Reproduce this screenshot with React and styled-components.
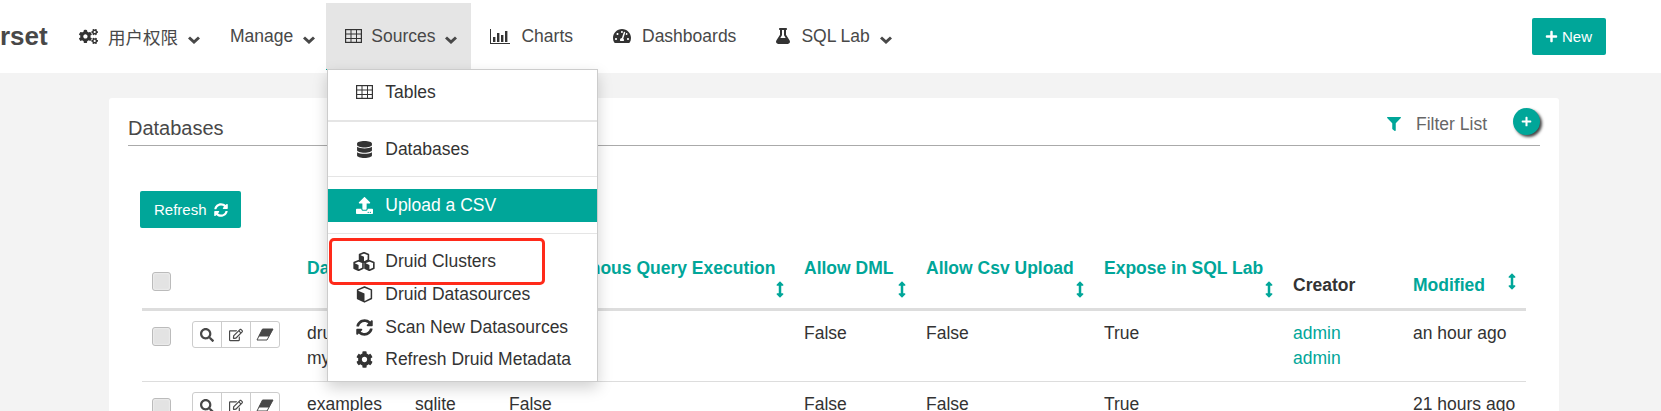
import styled, { createGlobalStyle } from "styled-components";
import {
  FaArrowsAltV,
  FaCog,
  FaCogs,
  FaDatabase,
  FaRegEdit,
  FaFilter,
  FaFlask,
  FaPlus,
  FaSearch,
  FaSyncAlt,
  FaTachometerAlt,
  FaUpload,
} from "react-icons/fa";

const GlobalStyle = createGlobalStyle`
  html, body {
    margin: 0;
    height: 411px;
    overflow: hidden;
    background: #f3f3f3;
    color: #333;
    font-family: "Liberation Sans", "Noto Sans CJK SC", sans-serif;
    font-size: 17.5px;
  }
`;

const Navbar = styled.nav`
  display: flex;
  align-items: center;
  height: 73px;
  box-sizing: border-box;
  padding: 3px 55px 3px 0;
  background: #fff;
`;

const Brand = styled.div`
  width: 60px;
  box-sizing: border-box;
  font-size: 26px;
  font-weight: 700;
  color: #484848;
`;

const NavItem = styled.div`
  position: relative;
  display: flex;
  align-items: center;
  gap: 10px;
  height: 67px;
  box-sizing: border-box;
  padding: 0 ${(p) => p.$right || 20}px 0 19px;
  background: ${(p) => (p.$active ? "#e5e5e5" : "transparent")};
  border-bottom: 1px solid ${(p) => (p.$active ? "#00a699" : "transparent")};
  color: #484848;
  white-space: nowrap;
`;

const NavIcon = styled.span`
  display: flex;
  align-items: center;
  margin-right: ${(p) => p.$after || 0}px;
  font-size: ${(p) => p.$size || 17}px;
  color: #333;
`;

const CaretSvg = styled.svg`
  width: 12px;
  height: 8px;
  margin-top: 8px;
  fill: none;
  stroke: #484848;
  stroke-width: 3;
`;

const Caret = () => (
  <CaretSvg viewBox="0 0 12 8">
    <path d="M1 1.5l5 4.5 5-4.5" />
  </CaretSvg>
);

const NewButton = styled.button`
  display: flex;
  align-items: center;
  gap: 4px;
  margin-left: auto;
  height: 37px;
  padding: 0 14px 0 13px;
  border: 0;
  border-radius: 2px;
  background: #00a699;
  color: #fff;
  font: 15px "Liberation Sans", sans-serif;
  svg {
    font-size: 13px;
  }
`;

const Dropdown = styled.div`
  position: absolute;
  top: 100%;
  left: 1px;
  z-index: 10;
  width: 271px;
  box-sizing: border-box;
  padding: 6px 0 5px;
  background: #fff;
  border: 1px solid #ccc;
  box-shadow: 0 6px 14px rgba(0, 0, 0, 0.18);
`;

const MenuItem = styled.div`
  display: flex;
  align-items: center;
  gap: 12px;
  height: ${(p) => (p.$highlight ? 33 : 32.7)}px;
  padding-left: 27px;
  background: ${(p) => (p.$highlight ? "#00a699" : "transparent")};
  color: ${(p) => (p.$highlight ? "#fff" : "#333")};
`;

const MenuIcon = styled.span`
  display: flex;
  justify-content: center;
  width: 18px;
  font-size: 17px;
  svg {
    flex-shrink: 0;
  }
`;

const MenuDivider = styled.div`
  height: ${(p) => (p.$thick ? 2 : 1)}px;
  margin: ${(p) => p.$top || 11}px 0 ${(p) => p.$bottom || 11}px;
  background: #e5e5e5;
`;

const Callout = styled.div`
  position: absolute;
  top: 168px;
  left: 1px;
  width: 216px;
  height: 47px;
  box-sizing: border-box;
  border: 3px solid #ff2a1a;
  border-radius: 5px;
`;

const Main = styled.main`
  padding: 25px 102px 0 109px;
`;

const Panel = styled.section`
  height: 400px;
  box-sizing: border-box;
  padding: 0 19px;
  background: #fff;
  border-radius: 3px;
`;

const PanelHeader = styled.header`
  display: flex;
  align-items: flex-start;
  height: 48px;
  box-sizing: border-box;
  padding-top: 12px;
  border-bottom: 1px solid #aaa;
`;

const PanelTitle = styled.h2`
  margin: 8px auto 0 0;
  font-size: 20px;
  font-weight: 400;
  line-height: 20px;
  color: #484848;
`;

const FilterLink = styled.div`
  display: flex;
  align-items: center;
  gap: 15px;
  margin: 3px 26px 0 0;
  line-height: 22px;
  color: #666;
  svg {
    font-size: 14px;
    color: #00a699;
  }
`;

const Fab = styled.button`
  display: flex;
  align-items: center;
  justify-content: center;
  width: 27px;
  height: 27px;
  margin-top: -2px;
  padding: 0;
  border: 0;
  border-radius: 50%;
  background: #00a699;
  color: #fff;
  font-size: 11px;
  box-shadow: 2px 2px 3px #444;
`;

const RefreshButton = styled.button`
  display: flex;
  align-items: center;
  gap: 7px;
  height: 37px;
  margin: 45px 0 28px 12px;
  padding: 0 13px 0 14px;
  border: 0;
  border-radius: 2px;
  background: #00a699;
  color: #fff;
  font: 15px "Liberation Sans", sans-serif;
  svg {
    font-size: 14px;
  }
`;

const Table = styled.table`
  width: 1384px;
  margin-left: 14px;
  table-layout: fixed;
  border-collapse: collapse;
`;

const Th = styled.th`
  padding: 0 10px 10px;
  vertical-align: bottom;
  text-align: left;
  border-bottom: 3px solid #ddd;
  font-weight: 700;
  line-height: 25px;
  white-space: nowrap;
  color: ${(p) => (p.$plain ? "#333" : "#00a699")};
`;

const SortHead = styled.div`
  display: ${(p) => (p.$inline ? "flex" : "block")};
  justify-content: space-between;
`;

const SortIcon = styled(FaArrowsAltV)`
  display: block;
  width: 8px;
  height: 17px;
  margin-left: auto;
`;

const Td = styled.td`
  padding: 10px;
  vertical-align: top;
  border-bottom: 1px solid #ddd;
  line-height: 25px;
  color: #333;
  white-space: nowrap;
`;

const CheckBox = styled.span`
  display: block;
  width: 19px;
  height: 19px;
  box-sizing: border-box;
  margin: ${(p) => (p.$head ? "0 0 7px" : "6px 0 0")};
  background: #e3e3e3;
  border: 1px solid #bbb;
  border-radius: 3px;
  box-shadow: inset 0 0 2px #fff;
`;

const ActionGroup = styled.div`
  display: inline-flex;
  height: 27px;
  box-sizing: border-box;
  vertical-align: top;
  border: 1px solid #ccc;
  border-radius: 3px;
`;

const ActionButton = styled.span`
  display: flex;
  align-items: center;
  justify-content: center;
  width: 28px;
  font-size: 14px;
  color: #484848;
  & + & {
    border-left: 1px solid #ccc;
  }
`;

const CreatorLink = styled.a`
  display: block;
  color: #00a699;
`;

const TableGlyph = () => (
  <svg width="17" height="14" viewBox="0 0 17 14" fill="none" stroke="currentColor" strokeWidth="1">
    <rect x="0.5" y="0.5" width="16" height="13" strokeWidth="1.4" />
    <path d="M0 5h17M0 9.5h17M6 1v12M11.5 1v12" />
  </svg>
);

const ChartGlyph = () => (
  <svg width="20" height="15" viewBox="0 0 20 15" fill="currentColor">
    <path d="M0 0h1v14h19v1H0z" />
    <path d="M3 8h2.4v5H3zM7 4h2.4v9H7zM11 6h2.4v7H11zM15 2h2.4v11H15z" />
  </svg>
);

// one isometric block: white top and right face, dark left face
const blockPath = "M8 1l6.5 2.6v8.2L8 15l-6.5-3.2V3.6z";
const blockFace = "M1.5 4.2L8 7v8l-6.5-3.2z";

const CubeGlyph = () => (
  <svg width="17" height="17" viewBox="0 0 16 16">
    <path d={blockPath} fill="#fff" stroke="#333" strokeWidth="1.4" strokeLinejoin="round" />
    <path d={blockFace} fill="#333" />
  </svg>
);

const CubesGlyph = () => (
  <svg width="22" height="19" viewBox="0 0 32 28">
    {[[8, 0], [0, 12], [16, 12]].map(([x, y]) => (
      <g key={`${x}-${y}`} transform={`translate(${x} ${y})`}>
        <path d={blockPath} fill="#fff" stroke="#333" strokeWidth="2.4" strokeLinejoin="round" />
        <path d={blockFace} fill="#333" />
      </g>
    ))}
  </svg>
);

const EraserGlyph = () => (
  <svg width="18" height="13" viewBox="0 0 18 13">
    <path d="M6.5 1H17L11 12H1z" fill="#fff" stroke="#484848" strokeLinejoin="round" />
    <path d="M6.5 1H17L13 8.5H2.5z" fill="#484848" />
  </svg>
);

const menuBottom = [
  { label: "Druid Clusters", icon: <CubesGlyph /> },
  { label: "Druid Datasources", icon: <CubeGlyph /> },
  { label: "Scan New Datasources", icon: <FaSyncAlt /> },
  { label: "Refresh Druid Metadata", icon: <FaCog /> },
];

const columns = [
  { width: 40 },
  { width: 115 },
  { width: 108, label: "Database" },
  { width: 94, label: "Backend" },
  { width: 295, label: "Asynchronous Query Execution" },
  { width: 122, label: "Allow DML" },
  { width: 178, label: "Allow Csv Upload" },
  { width: 189, label: "Expose in SQL Lab" },
  { width: 120, label: "Creator", plain: true },
  { width: 123, label: "Modified", inline: true },
];

const rows = [
  { name: ["druid", "mysql"], backend: "mysql", creator: ["admin", "admin"], modified: "an hour ago" },
  { name: ["examples"], backend: "sqlite", creator: [], modified: "21 hours ago" },
];

const Actions = () => (
  <ActionGroup>
    <ActionButton><FaSearch /></ActionButton>
    <ActionButton><FaRegEdit /></ActionButton>
    <ActionButton><EraserGlyph /></ActionButton>
  </ActionGroup>
);

const App = () => (
  <>
    <GlobalStyle />
    <Navbar>
      <Brand>rset</Brand>
      <NavItem $right={11}>
        <NavIcon $size={19}><FaCogs /></NavIcon>
        用户权限
        <Caret />
      </NavItem>
      <NavItem $right={11}>
        Manage
        <Caret />
      </NavItem>
      <NavItem $right={14} $active>
        <NavIcon $after={-1}><TableGlyph /></NavIcon>
        Sources
        <Caret />
        <Dropdown>
          <MenuItem>
            <MenuIcon><TableGlyph /></MenuIcon>
            Tables
          </MenuItem>
          <MenuDivider $thick />
          <MenuItem>
            <MenuIcon><FaDatabase /></MenuIcon>
            Databases
          </MenuItem>
          <MenuDivider $bottom={12} />
          <MenuItem $highlight>
            <MenuIcon><FaUpload /></MenuIcon>
            Upload a CSV
          </MenuItem>
          <MenuDivider />
          {menuBottom.map((item) => (
            <MenuItem key={item.label}>
              <MenuIcon>{item.icon}</MenuIcon>
              {item.label}
            </MenuItem>
          ))}
          <Callout />
        </Dropdown>
      </NavItem>
      <NavItem $right={21}>
        <NavIcon $after={1}><ChartGlyph /></NavIcon>
        Charts
      </NavItem>
      <NavItem>
        <NavIcon $size={18} $after={1}><FaTachometerAlt /></NavIcon>
        Dashboards
      </NavItem>
      <NavItem $right={13}>
        <NavIcon $size={16}><FaFlask /></NavIcon>
        SQL Lab
        <Caret />
      </NavItem>
      <NewButton><FaPlus />New</NewButton>
    </Navbar>
    <Main>
      <Panel>
        <PanelHeader>
          <PanelTitle>Databases</PanelTitle>
          <FilterLink><FaFilter />Filter List</FilterLink>
          <Fab><FaPlus /></Fab>
        </PanelHeader>
        <RefreshButton>Refresh <FaSyncAlt /></RefreshButton>
        <Table>
          <colgroup>
            {columns.map((col, i) => <col key={i} width={col.width} />)}
          </colgroup>
          <thead>
            <tr>
              <Th><CheckBox $head /></Th>
              <Th />
              {columns.slice(2).map((col) => (
                <Th key={col.label} $plain={col.plain}>
                  {col.plain ? col.label : (
                    <SortHead $inline={col.inline}>
                      {col.label}
                      <SortIcon />
                    </SortHead>
                  )}
                </Th>
              ))}
            </tr>
          </thead>
          <tbody>
            {rows.map((row) => (
              <tr key={row.backend}>
                <Td><CheckBox /></Td>
                <Td><Actions /></Td>
                <Td>{row.name.map((n) => <div key={n}>{n}</div>)}</Td>
                <Td>{row.backend}</Td>
                <Td>False</Td>
                <Td>False</Td>
                <Td>False</Td>
                <Td>True</Td>
                <Td>{row.creator.map((c, i) => <CreatorLink key={i}>{c}</CreatorLink>)}</Td>
                <Td>{row.modified}</Td>
              </tr>
            ))}
          </tbody>
        </Table>
      </Panel>
    </Main>
  </>
);

export default App;
